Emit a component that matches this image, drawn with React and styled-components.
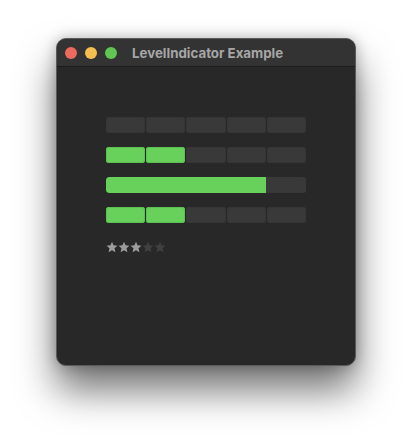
import styled, { createGlobalStyle } from "styled-components";

const GlobalStyle = createGlobalStyle`
    html, body { margin: 0; padding: 0; background: #ffffff; }
    body { font-family: "Inter", "Liberation Sans", sans-serif; }
`

const Page = styled.div`
    width: 412px;
    height: 440px;
    padding: 38px 0 0 56px;
    box-sizing: border-box;
`
const Window = styled.div`
    width: 300px;
    height: 328px;
    box-sizing: border-box;
    background: #282828;
    border: 1px solid #5a5a5a;
    border-radius: 10px;
    overflow: hidden;
    display: flex;
    flex-direction: column;
    box-shadow: 0 24px 38px rgba(0, 0, 0, 0.55), 0 0 14px rgba(0, 0, 0, 0.25);
`
const TitleBar = styled.div`
    height: 27px;
    flex: none;
    background: #333333;
    border-bottom: 1px solid #1c1c1c;
    display: flex;
    align-items: center;
    padding-left: 8px;
`
const Light = styled.span`
    width: 12px;
    height: 12px;
    border-radius: 50%;
    background: ${p => p.color};
    margin-right: 8px;
`
const Title = styled.div`
    margin-left: 7px;
    color: #a6a6a6;
    font-size: 13.3px;
    font-weight: 700;
`
const Content = styled.div`
    padding: 50px 0 0 49px;
    display: flex;
    flex-direction: column;
    gap: 14px;
`
const Discrete = styled.div`
    display: flex;
    gap: 1px;
    width: 200px;
    height: 16px;
`
const Segment = styled.div`
    flex: 1;
    border-radius: 3px;
    background: ${p => p.on ? "#67d15c" : "#393939"};
    box-shadow: inset 0 0 0 1px ${p => p.on ? "#5cc052" : "#363636"};
`
const Continuous = styled.div`
    width: 200px;
    height: 16px;
    border-radius: 3px;
    background: #393939;
    overflow: hidden;
`
const Fill = styled.div`
    height: 100%;
    background: #67d15c;
    border-radius: 3px 0 0 3px;
`
const Stars = styled.div`
    display: flex;
    margin-top: 4px;
    height: 14px;
`
const Star = styled.svg`
    width: 12px;
    height: 12px;
    fill: ${p => p.on ? "#9c9c9c" : "#404040"};
`

function Level({ value }) {
    return (
        <Discrete>
            {[0, 1, 2, 3, 4].map(i => <Segment key={i} on={i < value ? 1 : 0} />)}
        </Discrete>
    )
}

export default function App() {
    return (
        <Page>
            <GlobalStyle />
            <Window>
                <TitleBar>
                    <Light color="#ee6a5f" />
                    <Light color="#f5bf4f" />
                    <Light color="#61c554" />
                    <Title>LevelIndicator Example</Title>
                </TitleBar>
                <Content>
                    <Level value={0} />
                    <Level value={2} />
                    <Continuous>
                        <Fill style={{ width: "80%" }} />
                    </Continuous>
                    <Level value={2} />
                    <Stars>
                        {[0, 1, 2, 3, 4].map(i => (
                            <Star key={i} on={i < 3 ? 1 : 0} viewBox="0 0 24 24">
                                <path d="M12 1.5l3.1 7.2 7.8.7-5.9 5.2 1.8 7.7L12 18.3l-6.8 4 1.8-7.7-5.9-5.2 7.8-.7z" />
                            </Star>
                        ))}
                    </Stars>
                </Content>
            </Window>
        </Page>
    )
}
